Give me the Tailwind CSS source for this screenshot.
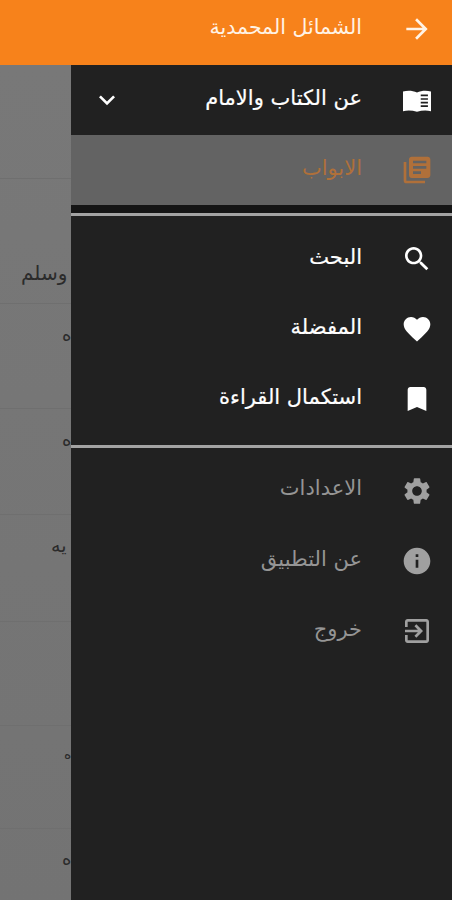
<!DOCTYPE html>
<html lang="ar">
<head>
    <meta charset="UTF-8">
    <meta name="viewport" content="width=device-width, initial-scale=1.0">
    <title>الشمائل المحمدية</title>
    <script src="https://cdn.jsdelivr.net/npm/@tailwindcss/browser@4"></script>
</head>
<body class="bg-[#757575] font-['DejaVu_Sans',sans-serif]">
<div class="w-[452px] h-[900px] flex flex-col overflow-hidden">
    <!-- app bar -->
    <header dir="rtl" class="h-[65px] shrink-0 bg-[#f7821b] flex items-center pr-[19px] pb-[7px] text-[#fff3e6] shadow-sm">
        <svg class="w-8 h-8 shrink-0" viewBox="0 0 24 24" fill="currentColor"><path d="M12 4l-1.410 1.410L16.170 11H4v2h12.170l-5.580 5.590L12 20l8-8z"/></svg>
        <span class="mr-[39px] text-[20.5px] leading-none -mt-[3px]">الشمائل المحمدية</span>
    </header>

    <div class="flex flex-1 min-h-0">
        <!-- page behind the drawer -->
        <div class="w-[71px] shrink-0 overflow-hidden bg-linear-to-b from-[#787878] to-[#737373] text-[20px] leading-none whitespace-nowrap text-[#2b2b2b]">
            <div class="h-[114px] border-b border-[#6f6f6f]"></div>
            <div class="h-[125px] border-b border-[#6f6f6f] pl-[21px] pt-[84px]">وسلم</div>
            <div class="h-[105px] border-b border-[#6f6f6f] pl-[62px] pt-[22px] text-[18px]">ه</div>
            <div class="h-[106px] border-b border-[#6f6f6f] pl-[62px] pt-[22px] text-[18px]">ه</div>
            <div class="h-[107px] border-b border-[#6f6f6f] pl-[51px] pt-[21px] text-[19px]">يه</div>
            <div class="h-[104px] border-b border-[#6f6f6f]"></div>
            <div class="h-[103px] border-b border-[#6f6f6f] pl-[64px] pt-[21px] text-[14px]">ه</div>
            <div class="pl-[62px] pt-[21px] text-[18px]">ه</div>
        </div>

        <!-- drawer -->
        <nav dir="rtl" class="flex-1 bg-[#212121] text-[21px] leading-none">
            <div class="h-[70px] flex items-center pr-[19px] text-white">
                <svg class="w-8 h-8 shrink-0" viewBox="0 0 24 24" fill="currentColor"><path fill-rule="evenodd" d="M1.500 5.600c3.500-.9 7.300-.7 10.500.7 3.200-1.400 7-1.600 10.500-.7v14.800c-3.500-.9-7-.7-10.500.5-3.500-1.200-7-1.400-10.500-.5zM14.800 7.900v1.300h5.400v-1.300zm0 2.700v1.300h5.400v-1.300zm0 2.700v1.300h5.400v-1.300zm0 2.700v1.300h5.400v-1.300z"/></svg>
                <span class="mr-[39px] -mt-1 [-webkit-text-stroke:0.2px_currentColor]">عن الكتاب والامام</span>
                <svg class="w-8 h-8 mr-auto ml-5 shrink-0" viewBox="0 0 24 24" fill="currentColor"><path d="M7.410 8.590L12 13.170l4.590-4.580L18 10l-6 6-6-6z"/></svg>
            </div>
            <div class="h-[70px] flex items-center pr-[19px] bg-[#636363] text-[#b0703a]">
                <svg class="w-8 h-8 shrink-0" viewBox="0 0 24 24" fill="currentColor"><path d="M4 6H2v14c0 1.100.9 2 2 2h14v-2H4V6zm16-4H8c-1.100 0-2 .9-2 2v12c0 1.100.9 2 2 2h12c1.100 0 2-.9 2-2V4c0-1.100-.9-2-2-2zm-1 9H9V9h10v2zm-4 4H9v-2h6v2zm4-8H9V5h10v2z"/></svg>
                <span class="mr-[39px] -mt-1">الابواب</span>
            </div>
            <div class="h-[8px] bg-[#151515]"></div>
            <div class="h-[3px] bg-[#a3a3a3]"></div>

            <div class="h-[8px]"></div>
            <div class="h-[70px] flex items-center pr-[19px] text-white">
                <svg class="w-8 h-8 shrink-0" viewBox="0 0 24 24" fill="currentColor"><path d="M15.500 14h-.79l-.28-.27C15.410 12.590 16 11.110 16 9.500 16 5.910 13.090 3 9.500 3S3 5.910 3 9.500 5.910 16 9.500 16c1.610 0 3.090-.59 4.230-1.570l.27.28v.79l5 4.990L20.490 19l-4.990-5zm-6 0C7.010 14 5 11.990 5 9.500S7.010 5 9.500 5 14 7.010 14 9.500 11.990 14 9.500 14z"/></svg>
                <span class="mr-[39px] -mt-[3px] [-webkit-text-stroke:0.2px_currentColor]">البحث</span>
            </div>
            <div class="h-[70px] flex items-center pr-[19px] text-white">
                <svg class="w-8 h-8 shrink-0" viewBox="0 0 24 24" fill="currentColor"><path d="M12 21.350l-1.450-1.320C5.400 15.360 2 12.280 2 8.500 2 5.420 4.420 3 7.500 3c1.740 0 3.410.81 4.500 2.090C13.090 3.810 14.760 3 16.500 3 19.580 3 22 5.420 22 8.500c0 3.780-3.400 6.860-8.550 11.540L12 21.350z"/></svg>
                <span class="mr-[39px] -mt-[3px] [-webkit-text-stroke:0.2px_currentColor]">المفضلة</span>
            </div>
            <div class="h-[70px] flex items-center pr-[19px] text-white">
                <svg class="w-8 h-8 shrink-0" viewBox="0 0 24 24" fill="currentColor"><path d="M17 3H7c-1.100 0-1.990.9-1.990 2L5 21l7-3 7 3V5c0-1.100-.9-2-2-2z"/></svg>
                <span class="mr-[39px] -mt-[3px] [-webkit-text-stroke:0.2px_currentColor]">استكمال القراءة</span>
            </div>
            <div class="h-[11px]"></div>
            <div class="h-[3px] bg-[#a3a3a3]"></div>

            <div class="h-[8px]"></div>
            <div class="h-[70px] flex items-center pr-[19px] text-[#a0a0a0]">
                <svg class="w-8 h-8 shrink-0" viewBox="0 0 24 24" fill="currentColor"><path d="M19.140 12.940c.04-.3.06-.61.06-.94 0-.32-.02-.64-.07-.94l2.030-1.580c.18-.14.23-.41.12-.61l-1.920-3.320c-.12-.22-.37-.29-.59-.22l-2.390.96c-.5-.38-1.030-.7-1.620-.94l-.36-2.540c-.04-.24-.24-.41-.48-.41h-3.840c-.24 0-.43.17-.47.41l-.36 2.540c-.59.24-1.130.57-1.620.94l-2.390-.96c-.22-.08-.47 0-.59.22L2.740 8.870c-.12.21-.08.47.12.61l2.030 1.580c-.05.3-.09.63-.09.94s.02.64.07.94l-2.030 1.580c-.18.14-.23.41-.12.61l1.920 3.320c.12.22.37.29.59.22l2.390-.96c.5.38 1.030.7 1.620.94l.36 2.540c.05.24.24.41.48.41h3.840c.24 0 .44-.17.47-.41l.36-2.540c.59-.24 1.130-.56 1.620-.94l2.390.96c.22.08.47 0 .59-.22l1.920-3.320c.12-.22.07-.47-.12-.61l-2.010-1.580zM12 15.600c-1.980 0-3.600-1.620-3.600-3.600s1.620-3.600 3.600-3.600 3.600 1.620 3.600 3.600-1.620 3.600-3.600 3.600z"/></svg>
                <span class="mr-[39px] -mt-[5px] text-[#959595]">الاعدادات</span>
            </div>
            <div class="h-[70px] flex items-center pr-[19px] text-[#a0a0a0]">
                <svg class="w-8 h-8 shrink-0" viewBox="0 0 24 24" fill="currentColor"><path d="M12 2C6.480 2 2 6.480 2 12s4.480 10 10 10 10-4.480 10-10S17.520 2 12 2zm1 15h-2v-6h2v6zm0-8h-2V7h2v2z"/></svg>
                <span class="mr-[39px] -mt-1 text-[#959595]">عن التطبيق</span>
            </div>
            <div class="h-[70px] flex items-center pr-[19px] text-[#a0a0a0]">
                <svg class="w-8 h-8 shrink-0" viewBox="0 0 24 24" fill="currentColor"><path d="M10.090 15.590L11.500 17l5-5-5-5-1.410 1.410L12.670 11H3v2h9.670l-2.580 2.590zM19 3H5c-1.110 0-2 .9-2 2v4h2V5h14v14H5v-4H3v4c0 1.100.89 2 2 2h14c1.100 0 2-.9 2-2V5c0-1.100-.9-2-2-2z"/></svg>
                <span class="mr-[39px] -mt-1 text-[#959595]">خروج</span>
            </div>
        </nav>
    </div>
</div>
</body>
</html>
